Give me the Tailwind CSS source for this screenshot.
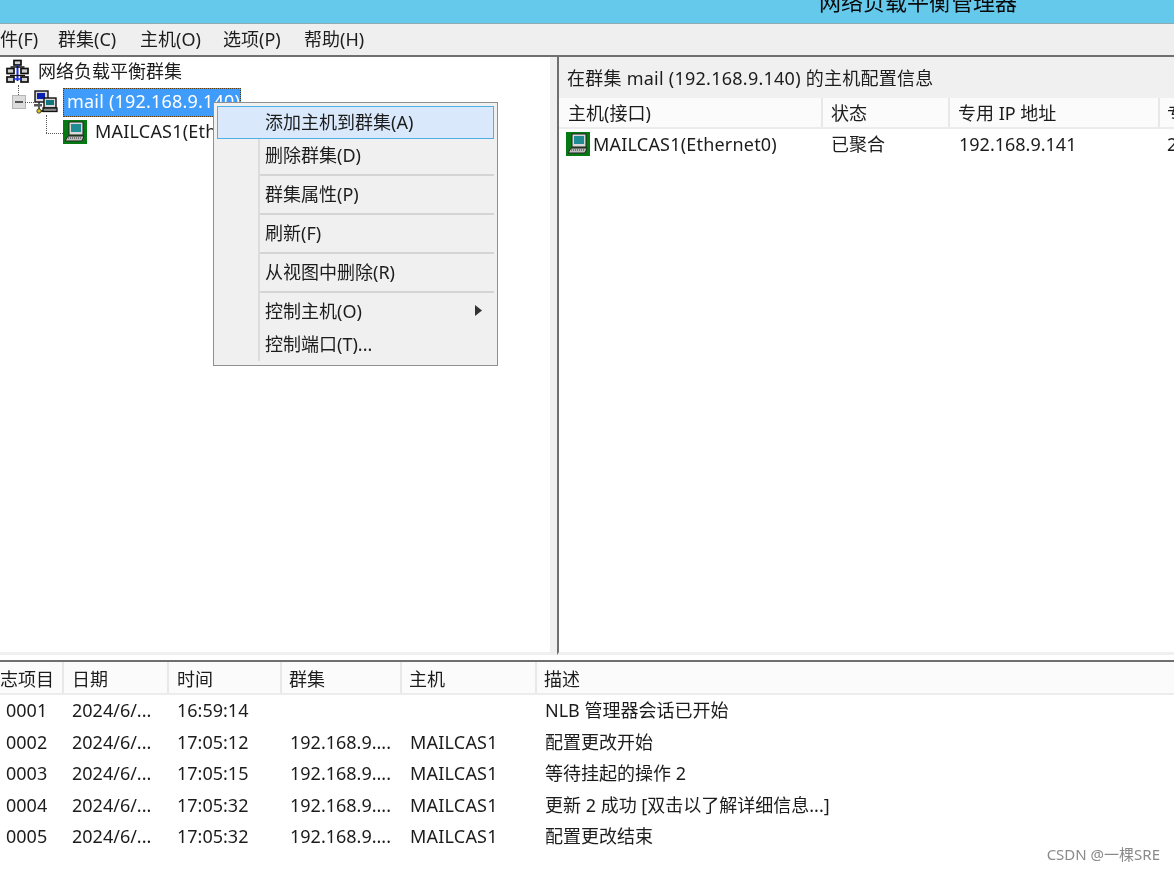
<!DOCTYPE html>
<html lang="zh-CN">
<head>
<meta charset="utf-8">
<title>网络负载平衡管理器</title>
<script src="https://cdn.jsdelivr.net/npm/@tailwindcss/browser@4"></script>
</head>
<body class="m-0 overflow-hidden bg-white">
<div class="relative w-[1174px] h-[870px] overflow-hidden flex flex-col bg-white text-[18px] text-[#1c1c1c] font-['Noto_Sans','Noto_Sans_CJK_SC',sans-serif] blur-[0.4px]">

  <!-- title bar -->
  <div class="h-6 shrink-0 bg-[#65c9ec] border-b border-[#8fa9b5] overflow-hidden pl-[819px]">
    <div class="text-[22px] leading-[22px] -mt-[10px] text-[#0a0a0a] whitespace-nowrap">网络负载平衡管理器</div>
  </div>

  <!-- menu bar -->
  <div class="h-[31px] shrink-0 bg-[#efefef] flex items-center pb-[2px] whitespace-nowrap leading-none">
    <span class="w-[58px]">件(F)</span>
    <span class="w-[82px]">群集(C)</span>
    <span class="w-[83px]">主机(O)</span>
    <span class="w-[81px]">选项(P)</span>
    <span>帮助(H)</span>
  </div>

  <!-- upper panes -->
  <div class="h-[600px] shrink-0 flex border-t-2 border-[#6f6f6f] bg-[#f0f0f0]">
    <!-- tree -->
    <div class="relative w-[550px] shrink-0 bg-white pb-[3px] border-b-[3px] border-[#f0f0f0]">
      <!-- connector lines -->
      <div class="absolute left-[18px] top-[28px] h-[10px] border-l border-dotted border-[#555]"></div>
      <div class="absolute left-[25px] top-[45px] w-[9px] border-t border-dotted border-[#555]"></div>
      <div class="absolute left-[46px] top-[58px] h-[18px] border-l border-dotted border-[#555]"></div>
      <div class="absolute left-[46px] top-[76px] w-[17px] border-t border-dotted border-[#555]"></div>

      <div class="flex items-center h-[30px] pl-[5px] pb-[2px] gap-2 whitespace-nowrap">
        <svg width="25" height="25" viewBox="0 0 25 25" class="shrink-0">
          <g fill="#cfcfcf" stroke="#111" stroke-width="1.700">
            <rect x="9" y="1.500" width="7" height="4.500"/>
            <rect x="2" y="9.500" width="7" height="5"/>
            <rect x="16" y="9.500" width="7" height="5"/>
            <rect x="2" y="18" width="7" height="5"/>
            <rect x="16" y="18" width="7" height="5"/>
          </g>
          <path d="M12.500 6V22" stroke="#1a32e0" stroke-width="2"/>
          <path d="M5.500 8H19.500" stroke="#111" stroke-width="1.500" fill="none"/>
          <path d="M5 16.500H20" stroke="#111" stroke-width="1.300" fill="none"/>
          <path d="M9 20H16" stroke="#1a32e0" stroke-width="1.500"/>
        </svg>
        <span class="leading-none">网络负载平衡群集</span>
      </div>

      <div class="flex items-center h-[30px] pl-[12px] whitespace-nowrap">
        <div class="w-[14px] h-[14px] shrink-0 bg-[#dcdcdc] border border-[#b5b5b5] flex items-center justify-center">
          <div class="w-[8px] h-[2px] bg-[#555]"></div>
        </div>
        <svg width="25" height="25" viewBox="0 0 25 25" class="shrink-0 ml-[7px]">
          <rect x="2" y="1" width="13" height="11" fill="#d8d8d8" stroke="#111" stroke-width="1.400"/>
          <rect x="4" y="3" width="8" height="6" fill="#0b1fb0"/>
          <rect x="11" y="8" width="12" height="10" fill="#d8d8d8" stroke="#111" stroke-width="1.400"/>
          <rect x="13" y="10" width="8" height="5" fill="#11777c"/>
          <rect x="10" y="18" width="14" height="3.500" fill="#888" stroke="#111" stroke-width="1.300"/>
          <path d="M6 12V21H10" stroke="#111" stroke-width="1.300" fill="none"/>
          <rect x="1" y="14" width="8" height="2.500" fill="#555"/>
          <circle cx="6" cy="21" r="2.200" fill="#d8c820" stroke="#111" stroke-width=".7"/>
        </svg>
        <div class="ml-[5px] w-[178px] h-[29px] bg-[#3f9cfb] border border-dotted border-[#5a3a10] text-white pl-[3px] pb-[2px] flex items-center leading-none tracking-[0.2px]">mail (192.168.9.140)</div>
      </div>

      <div class="flex items-center h-[30px] pl-[63px] pb-[2px] gap-2 whitespace-nowrap">
        <svg width="24" height="24" viewBox="0 0 24 24" class="shrink-0 translate-y-[1px]">
          <rect width="24" height="24" fill="#067a12"/>
          <rect x="6" y="2" width="14" height="13" fill="#d8d8d8" stroke="#222"/>
          <rect x="8" y="4" width="10" height="8" fill="#1e8c92"/>
          <path d="M5 16H21L19 21H2Z" fill="#bdbdbd" stroke="#222"/>
          <path d="M5 18H18" stroke="#333" stroke-dasharray="1 1"/>
        </svg>
        <span class="leading-none tracking-[0.2px]">MAILCAS1(Ethernet0)</span>
      </div>
    </div>

    <!-- splitter -->
    <div class="w-[7px] shrink-0 bg-[#f0f0f0]"></div>

    <!-- detail pane -->
    <div class="flex-1 min-w-0 overflow-hidden border-l-2 border-[#6f6f6f] border-b-[3px] border-b-[#f0f0f0] bg-white">
      <div class="h-[41px] bg-[#f0f0f0] pl-[8px] flex items-center whitespace-nowrap leading-none tracking-[0.25px]">在群集 mail (192.168.9.140) 的主机配置信息</div>
      <div class="h-[31px] flex bg-[#fbfbfb] border-b-2 border-[#ececec] whitespace-nowrap leading-none">
        <div class="w-[264px] shrink-0 pl-[9px] flex items-center border-r-2 border-[#e8e8e8]">主机(接口)</div>
        <div class="w-[127px] shrink-0 pl-[8px] flex items-center border-r-2 border-[#e8e8e8]">状态</div>
        <div class="w-[210px] shrink-0 pl-[8px] flex items-center border-r-2 border-[#e8e8e8]">专用 IP 地址</div>
        <div class="pl-[7px] flex items-center">专用</div>
      </div>
      <div class="h-[30px] flex items-center whitespace-nowrap leading-none">
        <div class="w-[264px] shrink-0 pl-[7px] flex items-center gap-[3px]">
          <svg width="24" height="24" viewBox="0 0 24 24" class="shrink-0">
            <rect width="24" height="24" fill="#067a12"/>
            <rect x="6" y="2" width="14" height="13" fill="#d8d8d8" stroke="#222"/>
            <rect x="8" y="4" width="10" height="8" fill="#1e8c92"/>
            <path d="M5 16H21L19 21H2Z" fill="#bdbdbd" stroke="#222"/>
            <path d="M5 18H18" stroke="#333" stroke-dasharray="1 1"/>
          </svg>
          <span class="tracking-[0.2px]">MAILCAS1(Ethernet0)</span>
        </div>
        <div class="w-[127px] shrink-0 pl-[8px]">已聚合</div>
        <div class="w-[210px] shrink-0 pl-[9px]">192.168.9.141</div>
        <div class="pl-[7px]">255.255.255.0</div>
      </div>
    </div>
  </div>

  <!-- log -->
  <div class="flex-1 min-h-0 border-t-2 border-[#6f6f6f] mt-[5px] bg-white whitespace-nowrap leading-none">
    <div class="h-[33px] flex bg-[#fbfbfb] border-b-2 border-[#ececec]">
      <div class="w-[64px] shrink-0 pt-[2px] flex items-center border-r-2 border-[#e8e8e8]">志项目</div>
      <div class="w-[105px] shrink-0 pt-[2px] pl-[8px] flex items-center border-r-2 border-[#e8e8e8]">日期</div>
      <div class="w-[113px] shrink-0 pt-[2px] pl-[8px] flex items-center border-r-2 border-[#e8e8e8]">时间</div>
      <div class="w-[120px] shrink-0 pt-[2px] pl-[7px] flex items-center border-r-2 border-[#e8e8e8]">群集</div>
      <div class="w-[135px] shrink-0 pt-[2px] pl-[7px] flex items-center border-r-2 border-[#e8e8e8]">主机</div>
      <div class="pl-[7px] pt-[2px] flex items-center">描述</div>
    </div>
    <div class="flex h-[31.5px] pb-[1.5px] items-center">
      <div class="w-[64px] shrink-0 pl-[6px]">0001</div><div class="w-[105px] shrink-0 pl-[8px]">2024/6/...</div><div class="w-[113px] shrink-0 pl-[8px]">16:59:14</div><div class="w-[120px] shrink-0 pl-[8px]"></div><div class="w-[135px] shrink-0 pl-[8px]"></div><div class="pl-[8px]">NLB 管理器会话已开始</div>
    </div>
    <div class="flex h-[31.5px] pb-[1.5px] items-center">
      <div class="w-[64px] shrink-0 pl-[6px]">0002</div><div class="w-[105px] shrink-0 pl-[8px]">2024/6/...</div><div class="w-[113px] shrink-0 pl-[8px]">17:05:12</div><div class="w-[120px] shrink-0 pl-[8px]">192.168.9....</div><div class="w-[135px] shrink-0 pl-[8px] tracking-[0.2px]">MAILCAS1</div><div class="pl-[8px]">配置更改开始</div>
    </div>
    <div class="flex h-[31.5px] pb-[1.5px] items-center">
      <div class="w-[64px] shrink-0 pl-[6px]">0003</div><div class="w-[105px] shrink-0 pl-[8px]">2024/6/...</div><div class="w-[113px] shrink-0 pl-[8px]">17:05:15</div><div class="w-[120px] shrink-0 pl-[8px]">192.168.9....</div><div class="w-[135px] shrink-0 pl-[8px] tracking-[0.2px]">MAILCAS1</div><div class="pl-[8px]">等待挂起的操作 2</div>
    </div>
    <div class="flex h-[31.5px] pb-[1.5px] items-center">
      <div class="w-[64px] shrink-0 pl-[6px]">0004</div><div class="w-[105px] shrink-0 pl-[8px]">2024/6/...</div><div class="w-[113px] shrink-0 pl-[8px]">17:05:32</div><div class="w-[120px] shrink-0 pl-[8px]">192.168.9....</div><div class="w-[135px] shrink-0 pl-[8px] tracking-[0.2px]">MAILCAS1</div><div class="pl-[8px]">更新 2 成功 [双击以了解详细信息...]</div>
    </div>
    <div class="flex h-[31.5px] pb-[1.5px] items-center">
      <div class="w-[64px] shrink-0 pl-[6px]">0005</div><div class="w-[105px] shrink-0 pl-[8px]">2024/6/...</div><div class="w-[113px] shrink-0 pl-[8px]">17:05:32</div><div class="w-[120px] shrink-0 pl-[8px]">192.168.9....</div><div class="w-[135px] shrink-0 pl-[8px] tracking-[0.2px]">MAILCAS1</div><div class="pl-[8px]">配置更改结束</div>
    </div>
  </div>

  <!-- context menu -->
  <div class="absolute left-[213px] top-[102px] w-[285px] h-[264px] bg-[#f0f0f0] border border-[#8f8f8f] pl-[3px] pr-[3px] pt-[3px] whitespace-nowrap leading-none">
    <div class="absolute left-[44px] top-[36px] bottom-[4px] w-[2px] bg-[#dcdcdc]"></div>
    <div class="h-[33px] bg-[#d9e9fb] border border-[#4fb0e8] pl-[47px] pb-[2px] flex items-center">添加主机到群集(A)</div>
    <div class="h-[34px] pl-[48px] pb-[2px] flex items-center">删除群集(D)</div>
    <div class="h-[2px] my-[1px] ml-[42px] bg-[#d4d4d4]"></div>
    <div class="h-[35px] pl-[48px] pb-[2px] flex items-center">群集属性(P)</div>
    <div class="h-[2px] my-[1px] ml-[42px] bg-[#d4d4d4]"></div>
    <div class="h-[35px] pl-[48px] pb-[2px] flex items-center">刷新(F)</div>
    <div class="h-[2px] my-[1px] ml-[42px] bg-[#d4d4d4]"></div>
    <div class="h-[35px] pl-[48px] pb-[2px] flex items-center">从视图中删除(R)</div>
    <div class="h-[2px] my-[1px] ml-[42px] bg-[#d4d4d4]"></div>
    <div class="h-[35px] pl-[48px] pr-[12px] pb-[2px] flex items-center justify-between">
      <span>控制主机(O)</span>
      <svg width="7" height="11" viewBox="0 0 7 11"><path d="M0 0L7 5.500L0 11Z" fill="#333"/></svg>
    </div>
    <div class="h-[33px] pl-[48px] pb-[3px] flex items-center">控制端口(T)...</div>
  </div>

  <!-- watermark -->
  <div class="absolute right-[14px] top-[847px] text-[15px] leading-none text-[#8a8a8a] whitespace-nowrap">CSDN @一棵SRE</div>
</div>
</body>
</html>
